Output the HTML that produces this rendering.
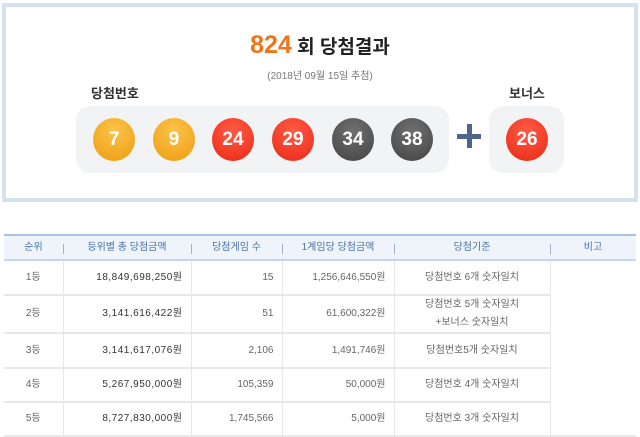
<!DOCTYPE html>
<html><head><meta charset="utf-8"><style>
body{margin:0;width:640px;height:437px;background:#fff;font-family:"Liberation Sans","Noto Sans CJK KR",sans-serif;position:relative;overflow:hidden}
.box{position:absolute;left:2px;top:3px;width:628px;height:191px;border:4px solid #d6e1ee;background:#fff}
.title{position:absolute;left:0;width:640px;top:31px;text-align:center;font-size:19px;color:#222;font-weight:bold}
.title b{color:#f07418;font-size:25px;font-family:"Liberation Sans",sans-serif}
.date{position:absolute;left:0;width:640px;top:67px;text-align:center;font-size:10px;color:#777}
.lbl{position:absolute;top:83px;font-size:13px;color:#333;font-weight:bold}
.gray{position:absolute;background:#f2f3f5;border-radius:14px;top:106px;height:67px}
.ball{position:absolute;width:42px;height:43px;border-radius:50%;top:118px;color:#fff;font-weight:bold;font-size:19px;text-align:center;line-height:43px;font-family:"Liberation Sans",sans-serif}
.y{background:radial-gradient(circle at 50% 30%,#fbc34a,#ee9c10)}
.r{background:radial-gradient(circle at 50% 30%,#ff5a45,#e82a16)}
.k{background:radial-gradient(circle at 50% 30%,#6f6f6f,#444)}
.plus{position:absolute;left:457px;top:124px;width:24px;height:24px}
.plus:before{content:"";position:absolute;left:0;top:10px;width:24px;height:5px;background:#50658a}
.plus:after{content:"";position:absolute;left:10px;top:0;width:5px;height:24px;background:#50658a}
table{position:absolute;left:4px;top:234px;width:632px;border-collapse:collapse;font-size:10px;color:#666;line-height:14px}
th{height:23px;background:#eef4fa;color:#4a72a8;font-weight:normal;border-top:2px solid #a9c3de;border-bottom:2px solid #c4d6ea;position:relative;padding:0}
th+th:before{content:"";position:absolute;left:0;top:8px;height:10px;border-left:1px solid #9bb3cf}
td{border-bottom:2px solid #e8e8e8;border-right:1px solid #e8e8e8;padding:0 8px}
td.c{text-align:center}td.rt{text-align:right}
td.m{color:#333;letter-spacing:0.5px}
</style></head><body>
<div class="box"></div>
<div class="title"><b>824</b> 회 당첨결과</div>
<div class="date">(2018년 09월 15일 추첨)</div>
<div class="lbl" style="left:91px">당첨번호</div>
<div class="lbl" style="left:509px">보너스</div>
<div class="gray" style="left:76px;width:373px"></div>
<div class="gray" style="left:489px;width:75px"></div>
<div class="ball y" style="left:93px">7</div>
<div class="ball y" style="left:153px">9</div>
<div class="ball r" style="left:212px">24</div>
<div class="ball r" style="left:272px">29</div>
<div class="ball k" style="left:332px">34</div>
<div class="ball k" style="left:391px">38</div>
<div class="plus"></div>
<div class="ball r" style="left:506px">26</div>
<table>
<tr><th style="width:59px">순위</th><th style="width:128px">등위별 총 당첨금액</th><th style="width:91px">당첨게임 수</th><th style="width:112px">1계임당 당첨금액</th><th style="width:156px">당첨기준</th><th>비고</th></tr>
<tr style="height:35px"><td class="c">1등</td><td class="rt m">18,849,698,250원</td><td class="rt">15</td><td class="rt">1,256,646,550원</td><td class="c">당첨번호 6개 숫자일치</td><td rowspan="5" style="border-bottom:2px solid #e8e8e8;border-right:none"></td></tr>
<tr style="height:37px"><td class="c">2등</td><td class="rt m">3,141,616,422원</td><td class="rt">51</td><td class="rt">61,600,322원</td><td class="c" style="line-height:18px">당첨번호 5개 숫자일치<br>+보너스 숫자일치</td></tr>
<tr style="height:35px"><td class="c">3등</td><td class="rt m">3,141,617,076원</td><td class="rt">2,106</td><td class="rt">1,491,746원</td><td class="c">당첨번호5개 숫자일치</td></tr>
<tr style="height:34px"><td class="c">4등</td><td class="rt m">5,267,950,000원</td><td class="rt">105,359</td><td class="rt">50,000원</td><td class="c">당첨번호 4개 숫자일치</td></tr>
<tr style="height:34px"><td class="c">5등</td><td class="rt m">8,727,830,000원</td><td class="rt">1,745,566</td><td class="rt">5,000원</td><td class="c">당첨번호 3개 숫자일치</td></tr>
</table>
</body></html>
